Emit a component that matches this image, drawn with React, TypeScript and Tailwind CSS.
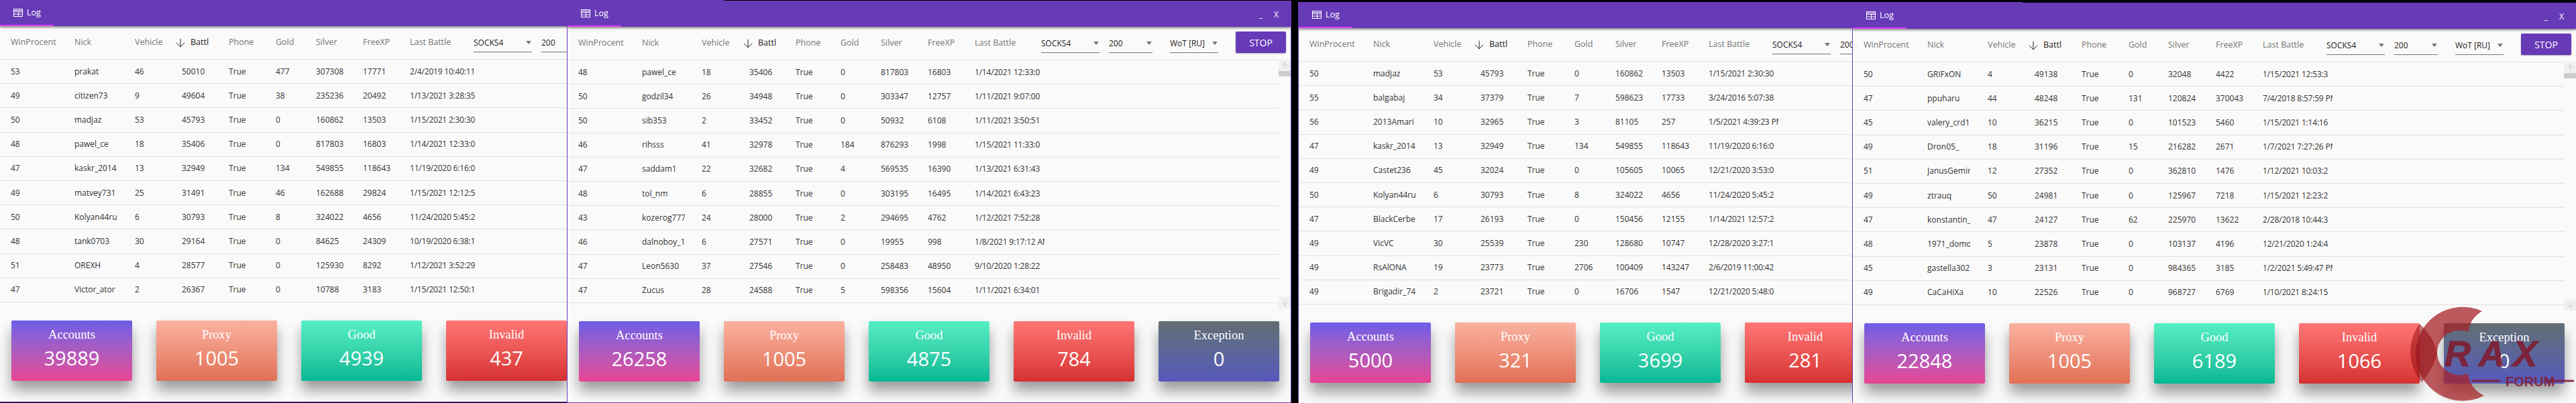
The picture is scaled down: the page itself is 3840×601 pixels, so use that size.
import React from 'react';
import { ArrowDown, ArrowUp } from 'lucide-react';

type Stat = { label: string; value: string; gradient: string };

type LogWindow = {
  position: string;
  gridCols: string;
  stats: number[];
  rows: string[];
};

const STAT_STYLES = [
  { label: 'Accounts', gradient: 'bg-gradient-to-b from-[#6c5ce7] to-[#e84393]' },
  { label: 'Proxy', gradient: 'bg-gradient-to-b from-[#fab1a0] to-[#e17055]' },
  { label: 'Good', gradient: 'bg-gradient-to-b from-[#55efc4] to-[#00b894]' },
  { label: 'Invalid', gradient: 'bg-gradient-to-b from-[#ff7675] to-[#d63031]' },
  { label: 'Exception', gradient: 'bg-gradient-to-b from-[#636e72] to-[#5758bb]' },
];

const COLUMNS = ['WinProcent', 'Nick', 'Vehicle', 'Battl', 'Phone', 'Gold', 'Silver', 'FreeXP', 'Last Battle'];

// win|nick|vehicle|battles|gold|silver|freexp|last battle, phone is always True
const WINDOWS: LogWindow[] = [
  {
    position: '-left-[1px] top-0 z-10',
    gridCols: 'grid-cols-[95px_90px_70px_70px_70px_60px_70px_70px_110px]',
    stats: [39889, 1005, 4939, 437, 0],
    rows: [
      '53|prakat|46|50010|477|307308|17771|2/4/2019 10:40:11',
      '49|citizen73|9|49604|38|235236|20492|1/13/2021 3:28:35',
      '50|madjaz|53|45793|0|160862|13503|1/15/2021 2:30:30',
      '48|pawel_ce|18|35406|0|817803|16803|1/14/2021 12:33:0',
      '47|kaskr_2014|13|32949|134|549855|118643|11/19/2020 6:16:0',
      '49|matvey731|25|31491|46|162688|29824|1/15/2021 12:12:5',
      '50|Kolyan44ru|6|30793|8|324022|4656|11/24/2020 5:45:2',
      '48|tank0703|30|29164|0|84625|24309|10/19/2020 6:38:1',
      '51|OREXH|4|28577|0|125930|8292|1/12/2021 3:52:29',
      '47|Victor_ator|2|26367|0|10788|3183|1/15/2021 12:50:1',
    ],
  },
  {
    position: 'left-[845px] top-[1px] z-20',
    gridCols: 'grid-cols-[95px_89px_71px_69px_67px_60px_70px_70px_110px]',
    stats: [26258, 1005, 4875, 784, 0],
    rows: [
      '48|pawel_ce|18|35406|0|817803|16803|1/14/2021 12:33:0',
      '50|godzil34|26|34948|0|303347|12757|1/11/2021 9:07:00',
      '50|sib353|2|33452|0|50932|6108|1/11/2021 3:50:51',
      '46|rihsss|41|32978|184|876293|1998|1/15/2021 11:33:0',
      '47|saddam1|22|32682|4|569535|16390|1/13/2021 6:31:43',
      '48|tol_nm|6|28855|0|303195|16495|1/14/2021 6:43:23',
      '43|kozerog777|24|28000|2|294695|4762|1/12/2021 7:52:28',
      '46|dalnoboy_1|6|27571|0|19955|998|1/8/2021 9:17:12 AM',
      '47|Leon5630|37|27546|0|258483|48950|9/10/2020 1:28:22',
      '47|Zucus|28|24588|5|598356|15604|1/11/2021 6:34:01',
    ],
  },
  {
    position: 'left-[1935px] top-[3px] z-10',
    gridCols: 'grid-cols-[95px_90px_70px_70px_70px_61px_69px_70px_110px]',
    stats: [5000, 321, 3699, 281, 0],
    rows: [
      '50|madjaz|53|45793|0|160862|13503|1/15/2021 2:30:30',
      '55|balgabaj|34|37379|7|598623|17733|3/24/2016 5:07:38',
      '56|2013Amari|10|32965|3|81105|257|1/5/2021 4:39:23 PM',
      '47|kaskr_2014|13|32949|134|549855|118643|11/19/2020 6:16:0',
      '49|Castet236|45|32024|0|105605|10065|12/21/2020 3:53:0',
      '50|Kolyan44ru|6|30793|8|324022|4656|11/24/2020 5:45:2',
      '47|BlackCerbe|17|26193|0|150456|12155|1/14/2021 12:57:2',
      '49|VicVC|30|25539|230|128680|10747|12/28/2020 3:27:1',
      '49|RsAlONA|19|23773|2706|100409|143247|2/6/2019 11:00:42',
      '49|Brigadir_74|2|23721|0|16706|1547|12/21/2020 5:48:0',
    ],
  },
  {
    position: 'left-[2761px] top-[4px] z-20',
    gridCols: 'grid-cols-[95px_90px_70px_70px_70px_59px_71px_70px_110px]',
    stats: [22848, 1005, 6189, 1066, 0],
    rows: [
      '50|GRIFxON|4|49138|0|32048|4422|1/15/2021 12:53:3',
      '47|ppuharu|44|48248|131|120824|370043|7/4/2018 8:57:59 PM',
      '45|valery_crd1|10|36215|0|101523|5460|1/15/2021 1:14:16',
      '49|Dron05_|18|31196|15|216282|2671|1/7/2021 7:27:26 PM',
      '51|JanusGemini|12|27352|0|362810|1476|1/12/2021 10:03:2',
      '49|ztrauq|50|24981|0|125967|7218|1/15/2021 12:23:2',
      '47|konstantin_|47|24127|62|225970|13622|2/28/2018 10:44:3',
      '48|1971_domo|5|23878|0|103137|4196|12/21/2020 1:24:4',
      '45|gastella302|3|23131|0|984365|3185|1/2/2021 5:49:47 PM',
      '49|CaCaHiXa|10|22526|0|968727|6769|1/10/2021 8:24:15',
    ],
  },
];

const LogIcon = () => (
  <svg width="14" height="12" viewBox="0 0 14 12" fill="none" stroke="white" strokeWidth="1">
    <rect x="0.5" y="0.5" width="13" height="11" />
    <path d="M0 2.5H14M0 4.5H14M7.5 4.5V11.5M7.5 8H14M0 8H7.5" />
  </svg>
);

const TitleBar = () => (
  <div className="relative z-10 flex h-[38px] shrink-0 items-start justify-between bg-[#673ab7] text-white shadow-[0_2px_3px_rgba(0,0,0,0.45)]">
    <div className="flex h-[38px] w-[80px] items-center gap-[6px] border-b-2 border-[#e040fb] pl-[20px] text-[12.5px]">
      <LogIcon />
      <span>Log</span>
    </div>
    <div className="flex items-center gap-[17px] pr-[18px] pt-[13px] text-[12px] leading-[14px]">
      <span>_</span>
      <span>X</span>
    </div>
  </div>
);

const Select = ({ value, width }: { value: string; width: string }) => (
  <div className={`flex h-[28px] items-center justify-between border-b border-[#757575] pr-[1px] text-[12px] text-[#212121] ${width}`}>
    <span>{value}</span>
    <svg width="8" height="5" viewBox="0 0 8 5" className="fill-[#757575]">
      <path d="M0 0H8L4 5Z" />
    </svg>
  </div>
);

const Toolbar = ({ gridCols }: { gridCols: string }) => (
  <div className="flex h-[49px] shrink-0">
    <div className={`grid w-[706px] shrink-0 items-center pl-[16px] text-[12.5px] text-[#757575] ${gridCols}`}>
      {COLUMNS.map((name) =>
        name === 'Battl' ? (
          <div key={name} className="-ml-[12px] flex items-center gap-[5px] font-medium text-[#212121]">
            <ArrowDown size={20} strokeWidth={1.2} className="shrink-0" />
            <span>{name}</span>
          </div>
        ) : (
          <div key={name}>{name}</div>
        ),
      )}
    </div>
    <div className="flex items-end self-end pb-[10px]">
      <Select value="SOCKS4" width="w-[87px]" />
      <div className="ml-[14px]">
        <Select value="200" width="w-[65px]" />
      </div>
      <div className="ml-[26px]">
        <Select value="WoT [RU]" width="w-[72px]" />
      </div>
      <button className="ml-[26px] h-[32px] w-[75px] rounded-[2px] bg-[#673ab7] text-[14px] font-medium text-white shadow-[0_1px_2px_rgba(0,0,0,0.3)]">
        STOP
      </button>
    </div>
  </div>
);

const Row = ({ data, gridCols }: { data: string; gridCols: string }) => {
  const [win, nick, vehicle, battles, gold, silver, freexp, last] = data.split('|');
  return (
    <div className={`grid h-[36.2px] items-center whitespace-nowrap border-b border-[#e0e0e0] pl-[16px] text-[12px] text-[#333] ${gridCols}`}>
      <div>{win}</div>
      <div className="w-[64px] overflow-hidden">{nick}</div>
      <div>{vehicle}</div>
      <div>{battles}</div>
      <div>True</div>
      <div>{gold}</div>
      <div className="w-[43px] overflow-hidden">{silver}</div>
      <div>{freexp}</div>
      <div className="w-[104px] overflow-hidden tracking-[-0.2px]">{last}</div>
    </div>
  );
};

const Scrollbar = () => (
  <div className="flex w-[18px] shrink-0 flex-col bg-[#fafafa] text-[#c4c4c4]">
    <div className="flex h-[17px] items-center justify-center bg-[#f0f0f0]">
      <ArrowUp size={13} strokeWidth={1.5} />
    </div>
    <div className="h-[8px] bg-[#cdcdcd]" />
    <div className="flex-1" />
    <div className="flex h-[17px] items-center justify-center bg-[#f0f0f0]">
      <ArrowDown size={13} strokeWidth={1.5} />
    </div>
  </div>
);

const StatCard = ({ label, value, gradient }: Stat) => (
  <div className={`flex h-[90px] w-[180px] shrink-0 flex-col items-center rounded-[2px] pt-[8px] text-white shadow-[0_14px_20px_rgba(0,0,0,0.38)] ${gradient}`}>
    <div className="h-[26px] text-[18.5px] leading-[26px] [font-family:'Liberation_Serif',serif]">{label}</div>
    <div className="mt-[2px] h-[40px] text-[29px] font-medium leading-[40px]">{value}</div>
  </div>
);

const Window = ({ win }: { win: LogWindow }) => (
  <div className={`absolute flex h-[600px] w-[1080px] flex-col overflow-hidden border border-[#673ab7] bg-[#fafafa] ${win.position}`}>
    <TitleBar />
    <Toolbar gridCols={win.gridCols} />
    <div className="flex h-[371px] shrink-0">
      <div className="w-[1060px] shrink-0 border-t border-[#e0e0e0]">
        {win.rows.map((row) => (
          <Row key={row} data={row} gridCols={win.gridCols} />
        ))}
      </div>
      <Scrollbar />
    </div>
    <div className="flex gap-[36px] pl-[17px] pt-[19px]">
      {STAT_STYLES.map((s, i) => (
        <StatCard key={s.label} label={s.label} gradient={s.gradient} value={String(win.stats[i])} />
      ))}
    </div>
  </div>
);

// forum watermark sitting over the last window
const Watermark = () => (
  <div className="absolute left-[3560px] top-[440px] z-30 h-[161px] w-[280px]">
    <svg width="280" height="161" viewBox="0 0 280 161" className="absolute left-0 top-0">
      <path
        d="M140 24A70 70 0 1 0 143 150Q122 140 119 117A33.4 33.4 0 1 1 119 55Q122 35 140 24Z"
        fill="rgba(165,35,40,0.75)"
      />
      <path d="M47 43A70 70 0 0 0 50 130Q70 105 73 87Q70 65 47 43Z" fill="rgba(150,15,20,0.55)" />
      <path d="M125 128H167M236 128H277" stroke="rgba(130,30,55,0.9)" strokeWidth="3" />
    </svg>
    <div className="absolute left-[84px] top-[57px] text-[54px] font-bold italic leading-[60px] tracking-[12px] text-[rgba(125,30,50,0.9)] [-webkit-text-stroke:1px_rgba(125,30,50,0.9)] [font-family:'Liberation_Sans',sans-serif]">
      RAX
    </div>
    <div className="absolute left-[175px] top-[118px] text-[20px] font-bold leading-[22px] text-[rgba(130,30,55,0.9)] [font-family:'Liberation_Sans_Narrow','Liberation_Sans',sans-serif]">
      FORUM
    </div>
  </div>
);

const App: React.FC = () => {
  return (
    <div className="relative h-[601px] w-[3840px] overflow-hidden bg-black [font-family:'Open_Sans',sans-serif]">
      {WINDOWS.map((win) => (
        <Window key={win.position} win={win} />
      ))}
      <Watermark />
    </div>
  );
};

export default App;
